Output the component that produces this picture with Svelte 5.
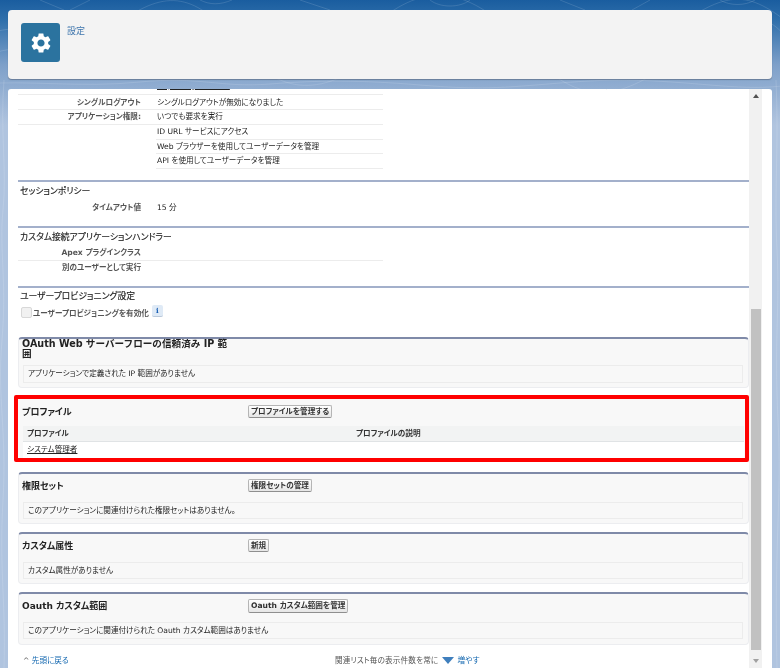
<script>
  const contour = [
    'M-20 40 C 30 5, 60 70, 110 30 S 190 -10, 230 35 S 330 60, 380 20 S 470 -10, 520 40 S 620 70, 680 25 S 760 0, 810 40',
    'M-20 60 C 40 25, 70 85, 120 50 S 200 15, 250 60 S 340 85, 400 40 S 480 15, 540 65 S 630 90, 700 45 S 770 20, 810 65',
    'M-20 84 C 30 80, 80 88, 140 82 S 220 88, 270 84 S 360 80, 420 85 S 500 88, 560 83 S 650 80, 710 85 S 770 86, 810 84',
    'M4 80 C 0 130, 7 170, 3 210 S 7 280, 2 340 S 7 430, 3 500 S 6 600, 4 668',
    'M776 80 C 779 150, 774 190, 777 250 S 774 340, 778 420 S 774 540, 777 668',
    'M40 0 L 64 10 M90 0 L 70 10 M200 0 C 210 5, 220 5, 232 0 M300 0 L 330 10 M430 0 C 440 8, 460 8, 470 0 M560 0 L 585 10 M650 0 L 632 10 M720 0 C 730 6, 745 6, 755 0'
  ];
  const perms = [
    'シングルログアウト|シングルログアウトが無効になりました',
    'アプリケーション権限:|いつでも要求を実行',
    '|ID URL サービスにアクセス',
    '|Web ブラウザーを使用してユーザーデータを管理',
    '|API を使用してユーザーデータを管理'
  ].map((s) => s.split('|'));
  const lists = [
    { title: '権限セット', btn: '権限セットの管理', msg: 'このアプリケーションに関連付けられた権限セットはありません。' },
    { title: 'カスタム属性', btn: '新規', msg: 'カスタム属性がありません' },
    { title: 'Oauth カスタム範囲', btn: 'Oauth カスタム範囲を管理', msg: 'このアプリケーションに関連付けられた Oauth カスタム範囲はありません' }
  ];
</script>

<div class="page">
  <svg class="topo" width="780" height="668" aria-hidden="true">
    {#each contour as d}
      <path {d} fill="none" stroke="#fff" stroke-opacity="0.13" stroke-width="1" />
    {/each}
  </svg>

  <header class="head">
    <div class="tile">
      <svg width="24" height="24" viewBox="0 0 24 24" aria-hidden="true">
        <path fill="#fff" fill-rule="evenodd" d="M19.14 12.94c.04-.3.06-.61.06-.94 0-.32-.02-.64-.07-.94l2.03-1.58c.18-.14.23-.41.12-.61l-1.92-3.32c-.12-.22-.37-.29-.59-.22l-2.39.96c-.5-.38-1.03-.7-1.62-.94l-.36-2.54c-.04-.24-.24-.41-.48-.41h-3.84c-.24 0-.43.17-.47.41l-.36 2.54c-.59.24-1.13.57-1.62.94l-2.39-.96c-.22-.08-.47 0-.59.22L2.74 8.87c-.12.21-.08.47.12.61l2.03 1.58c-.05.3-.09.63-.09.94s.02.64.07.94l-2.03 1.58c-.18.14-.23.41-.12.61l1.92 3.32c.12.22.37.29.59.22l2.39-.96c.5.38 1.03.7 1.62.94l.36 2.54c.05.24.24.41.48.41h3.84c.24 0 .44-.17.47-.41l.36-2.54c.59-.24 1.13-.56 1.62-.94l2.39.96c.22.08.47 0 .59-.22l1.92-3.32c.12-.22.07-.47-.12-.61l-2.01-1.58zM12 15.6c-1.98 0-3.6-1.62-3.6-3.6s1.62-3.6 3.6-3.6 3.6 1.62 3.6 3.6-1.62 3.6-3.6 3.6z" />
      </svg>
    </div>
    <span class="crumb">設定</span>
  </header>

  <main class="panel">
    <div class="scroll">
      <div class="inner">
        <div class="cut">
          <div class="cut-l"><span class="lab">コールバック URL</span></div>
          <a class="cut-v" href="#top">https://login.sf.com</a>
          <div class="cut-r">ポリシー   リフレッシュトークンが取り消されるまで有効</div>
        </div>

        <dl class="rows">
          {#each perms as [l, v], i}
            <div class="row" class:nolab={!l}>
              <dt>{l}</dt>
              <dd>{v}</dd>
            </div>
          {/each}
        </dl>

        <section class="sec s1">
          <h3>セッションポリシー</h3>
          <div class="row bare"><dt>タイムアウト値</dt><dd>15 分</dd></div>
        </section>

        <section class="sec s2">
          <h3>カスタム接続アプリケーションハンドラー</h3>
          <div class="row"><dt>Apex プラグインクラス</dt><dd></dd></div>
          <div class="row bare"><dt>別のユーザーとして実行</dt><dd></dd></div>
        </section>

        <section class="sec s3">
          <h3>ユーザープロビジョニング設定</h3>
          <div class="prov">
            <span class="check"></span>
            <span class="provlab">ユーザープロビジョニングを有効化</span>
            <span class="info">i</span>
          </div>
        </section>

        <section class="card first">
          <h2 class="narrow">OAuth Web サーバーフローの信頼済み IP 範囲</h2>
          <div class="msg">アプリケーションで定義された IP 範囲がありません</div>
        </section>

        <div class="mark">
          <section class="card prof">
            <div class="ch"><h2>プロファイル</h2><button>プロファイルを管理する</button></div>
            <div class="grid">
              <div class="gh"><span class="c1">プロファイル</span><span>プロファイルの説明</span></div>
              <div class="gr"><a href="#top">システム管理者</a></div>
            </div>
          </section>
        </div>

        {#each lists as l, i}
          <section class="card list" class:tall={i === 2}>
            <div class="ch"><h2>{l.title}</h2><button>{l.btn}</button></div>
            <div class="msg">{l.msg}</div>
          </section>
        {/each}

        <footer class="foot">
          <a class="back" href="#top"><span class="caret">^</span> 先頭に戻る</a>
          <span class="more">関連リスト毎の表示件数を常に <i class="tri"></i> <a href="#top">増やす</a></span>
        </footer>
      </div>
    </div>
    <div class="bar">
      <span class="up"></span>
      <div class="thumb"></div>
      <span class="down"></span>
    </div>
  </main>
</div>

<style>
  :global(body) {
    margin: 0;
    overflow: hidden;
    background: #b0c4df;
  }
  .page {
    position: relative;
    width: 780px;
    height: 668px;
    box-sizing: border-box;
    padding: 10px 8px 0;
    display: flex;
    flex-direction: column;
    gap: 10px;
    overflow: hidden;
    background: linear-gradient(#1a5d9f 0, #2f6fab 20px, #7ea0c9 65px, #b0c4df 125px);
    font-family: "DejaVu Sans", "Noto Sans CJK JP", sans-serif;
    font-feature-settings: "palt";
    font-size: 7.6px;
    color: #222;
    filter: blur(0.3px);
  }
  .topo {
    position: absolute;
    left: 0;
    top: 0;
  }
  .head {
    position: relative;
    height: 69px;
    box-sizing: border-box;
    padding: 13px;
    display: flex;
    gap: 7px;
    background: #f3f3f3;
    border-radius: 4px;
    box-shadow: 0 1px 1px rgba(70, 80, 100, 0.5);
  }
  .tile {
    width: 39px;
    height: 39px;
    border-radius: 3px;
    background: #2b739f;
    display: flex;
    align-items: center;
    justify-content: center;
  }
  .crumb {
    font-size: 9px;
    line-height: 16px;
    color: #3f76ad;
  }
  .panel {
    position: relative;
    flex: 1;
    min-height: 0;
    display: flex;
    background: #fff;
    border-radius: 3px 3px 0 0;
    padding-right: 10px;
  }
  .scroll {
    flex: 1;
    min-width: 0;
    overflow: hidden;
    padding-left: 10px;
  }
  .inner {
    margin-top: -9px;
  }
  .cut {
    position: relative;
    height: 15px;
    width: 365px;
    border-bottom: 1px solid #ececec;
    box-sizing: border-box;
    line-height: 9px;
    color: #222;
  }
  .cut-l {
    position: absolute;
    right: 242px;
    top: 1px;
    font-weight: 700;
    color: #555;
  }
  .cut-v {
    position: absolute;
    left: 139px;
    top: 1px;
    color: #222;
    white-space: nowrap;
    text-decoration: underline;
  }
  .cut-r {
    position: absolute;
    left: 417px;
    top: 1px;
    width: 300px;
    white-space: nowrap;
    color: #444;
  }
  .rows,
  dt,
  dd {
    margin: 0;
  }
  .rows {
    width: 365px;
    padding-top: 0.5px;
  }
  .row {
    display: flex;
    height: 14.7px;
    line-height: 14px;
    box-sizing: border-box;
    border-bottom: 1px solid #ececec;
    width: 365px;
  }
  .row.bare {
    border-bottom: 0;
  }
  .row.nolab {
    border-bottom: 0;
    background: linear-gradient(#ececec, #ececec) 138px 100% / 227px 1px no-repeat;
  }
  dt {
    width: 123px;
    flex: none;
    text-align: right;
    font-weight: 700;
    color: #555;
    white-space: nowrap;
  }
  dd {
    padding-left: 16px;
    white-space: nowrap;
    color: #1c1c1c;
  }
  .sec {
    border-top: 2px solid #a3b0cb;
    box-sizing: border-box;
  }
  .s1 {
    margin-top: 11.5px;
    height: 45.5px;
    padding-top: 3px;
  }
  .s2 {
    height: 60.5px;
    padding-top: 3px;
  }
  .s3 {
    height: 51px;
    padding-top: 2px;
  }
  h3 {
    margin: 0;
    font-size: 8.8px;
    line-height: 13px;
    font-weight: 400;
    color: #222;
    -webkit-text-stroke: 0.15px #222;
    padding-left: 2px;
    white-space: nowrap;
  }
  .s1 .row {
    margin-top: 3px;
  }
  .s2 .row {
    margin-top: 2px;
  }
  .s2 .row + .row {
    margin-top: 0;
  }
  .prov {
    display: flex;
    align-items: center;
    margin-top: 2px;
    height: 15px;
    padding-left: 3px;
  }
  .check {
    width: 9px;
    height: 9px;
    border: 1px solid #d8d8d8;
    border-radius: 2px;
    background: #f1f1f1;
  }
  .provlab {
    margin-left: 1px;
    font-weight: 700;
    color: #555;
    white-space: nowrap;
  }
  .info {
    margin: -4px 0 0 3px;
    width: 11px;
    height: 11px;
    line-height: 11px;
    text-align: center;
    border-radius: 2px;
    background: #dfeaf6;
    border-bottom: 1px solid #b9c8da;
    color: #1a5fb4;
    font-size: 7px;
    font-weight: 700;
    font-family: "DejaVu Serif", serif;
  }
  .card {
    border: 1px solid #ecedf0;
    border-top: 2px solid #7f8aa8;
    border-radius: 4px;
    background: #f8f8f8;
    box-sizing: border-box;
    padding: 0 5px 0 4px;
  }
  .first {
    height: 51px;
  }
  h2 {
    margin: 0;
    font-size: 9px;
    line-height: 10px;
    font-weight: 700;
    color: #222;
    white-space: nowrap;
  }
  .narrow {
    white-space: normal;
    width: 208px;
    margin-left: -1px;
    font-size: 9.6px;
    line-height: 10px;
    font-feature-settings: normal;
  }
  .msg {
    height: 18px;
    line-height: 16px;
    box-sizing: border-box;
    padding-left: 4px;
    border: 1px solid #ececec;
    background: #f8f8f8;
    white-space: nowrap;
  }
  .first .msg {
    margin-top: 6px;
  }
  .ch {
    display: flex;
    align-items: center;
    padding-top: 5px;
  }
  .ch h2 {
    width: 225px;
    flex: none;
    margin-left: -1px;
    margin-right: 1px;
  }
  button {
    height: 13px;
    padding: 0 2px;
    margin: 0;
    border: 1px solid #b5b5b5;
    border-bottom-color: #8f8f8f;
    border-radius: 2px;
    background: linear-gradient(#fff, #e6e6e6);
    font: 700 7.6px/10px "DejaVu Sans", "Noto Sans CJK JP", sans-serif;
    font-feature-settings: "palt";
    color: #333;
    white-space: nowrap;
  }
  .mark {
    margin: 7px 0 10px -4px;
    border: 4px solid #f00;
    border-radius: 2px;
    height: 67px;
    box-sizing: border-box;
  }
  .prof {
    height: 59px;
    border: 0;
    border-radius: 0;
    padding: 0 1px 0 5px;
  }
  .prof .ch {
    padding-top: 6px;
  }
  .grid {
    margin-top: 8px;
  }
  .gh {
    display: flex;
    height: 16px;
    line-height: 15px;
    padding-left: 4px;
    background: #f2f3f3;
    border-bottom: 1px solid #e0e3e5;
    box-sizing: border-box;
    font-weight: 700;
    color: #333;
  }
  .c1 {
    width: 329px;
  }
  .gr {
    height: 16px;
    line-height: 15px;
    padding-left: 4px;
    background: #fff;
  }
  .gr a {
    color: #222;
    text-decoration: underline;
  }
  .list {
    height: 52px;
    margin-bottom: 8px;
  }
  .list .msg {
    margin-top: 10px;
    height: 17px;
  }
  .list.tall {
    height: 53px;
    margin-bottom: 0;
  }
  .list.tall button {
    height: 14px;
  }
  .list.tall .msg {
    margin-top: 9px;
  }
  .foot {
    position: relative;
    height: 23px;
    line-height: 32px;
    padding-left: 5px;
    white-space: nowrap;
  }
  .back {
    color: #1468b0;
    text-decoration: none;
  }
  .caret {
    color: #555;
  }
  .more {
    position: absolute;
    left: 317px;
    top: 0;
    color: #555;
    letter-spacing: 0.15px;
  }
  .more a {
    color: #1468b0;
    text-decoration: none;
  }
  .tri {
    display: inline-block;
    width: 0;
    height: 0;
    margin: 0 1px;
    border: 6px solid transparent;
    border-top: 7px solid #3f7fbd;
    border-bottom: 0;
    vertical-align: -1px;
  }
  .bar {
    width: 13px;
    flex: none;
    background: #f1f1f1;
    display: flex;
    flex-direction: column;
    align-items: center;
    position: relative;
  }
  .thumb {
    position: absolute;
    top: 220px;
    left: 2px;
    right: 1px;
    bottom: 18px;
    background: #c1c1c1;
  }
  .up,
  .down {
    position: absolute;
    left: 4px;
    width: 0;
    height: 0;
    border: 3px solid transparent;
  }
  .up {
    top: 5px;
    border-top: 0;
    border-bottom: 4px solid #505050;
  }
  .down {
    bottom: 5px;
    border-bottom: 0;
    border-top: 4px solid #a0a0a0;
  }
</style>
